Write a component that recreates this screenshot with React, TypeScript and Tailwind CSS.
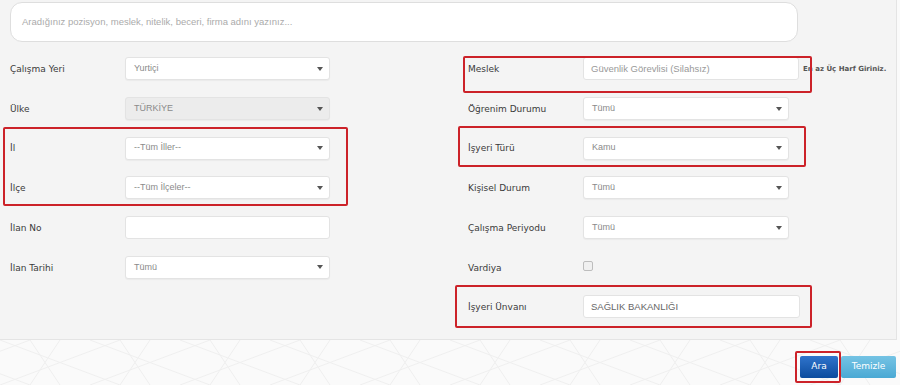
import React from 'react';

type Field =
  | { kind: 'select'; label: string; value: string; width: number; disabled?: boolean }
  | { kind: 'input'; label: string; value: string; width: number; strong?: boolean; hint?: string }
  | { kind: 'check'; label: string };

const leftFields: Field[] = [
  { kind: 'select', label: 'Çalışma Yeri', value: 'Yurtiçi', width: 205 },
  { kind: 'select', label: 'Ülke', value: 'TÜRKİYE', width: 205, disabled: true },
  { kind: 'select', label: 'İl', value: '--Tüm İller--', width: 205 },
  { kind: 'select', label: 'İlçe', value: '--Tüm İlçeler--', width: 205 },
  { kind: 'input', label: 'İlan No', value: '', width: 205 },
  { kind: 'select', label: 'İlan Tarihi', value: 'Tümü', width: 205 },
];

const rightFields: Field[] = [
  { kind: 'input', label: 'Meslek', value: 'Güvenlik Görevlisi (Silahsız)', width: 216, hint: 'En az Üç Harf Giriniz.' },
  { kind: 'select', label: 'Öğrenim Durumu', value: 'Tümü', width: 206 },
  { kind: 'select', label: 'İşyeri Türü', value: 'Kamu', width: 206 },
  { kind: 'select', label: 'Kişisel Durum', value: 'Tümü', width: 206 },
  { kind: 'select', label: 'Çalışma Periyodu', value: 'Tümü', width: 206 },
  { kind: 'check', label: 'Vardiya' },
  { kind: 'input', label: 'İşyeri Ünvanı', value: 'SAĞLIK BAKANLIĞI', width: 217, strong: true },
];

function FieldRow({ field }: { field: Field }) {
  return (
    <div className="flex items-center h-[39.7px]">
      <div className="w-[115px] shrink-0 pt-[2px] text-[9px] text-[#3a3a3a] font-['DejaVu_Sans',sans-serif]">
        {field.label}
      </div>
      {field.kind === 'select' && (
        <div
          style={{ width: field.width }}
          className={`h-[23px] flex items-center justify-between pl-[8px] pr-[6px] rounded-[3px] border border-[#e3e3e3] shadow-[0_1px_1px_rgba(0,0,0,0.04)] ${
            field.disabled ? 'bg-[#ececec]' : 'bg-white'
          }`}
        >
          <span className="text-[9px] text-[#8a8a8a] font-['Liberation_Sans',Arial,sans-serif]">{field.value}</span>
          <span className="w-0 h-0 border-l-[3px] border-r-[3px] border-t-[4px] border-l-transparent border-r-transparent border-t-[#555]" />
        </div>
      )}
      {field.kind === 'input' && (
        <div className="flex items-center">
          <div
            style={{ width: field.width }}
            className="h-[23px] flex items-center pl-[7px] rounded-[3px] border border-[#e3e3e3] bg-white"
          >
            <span
              className={`font-['Liberation_Sans',Arial,sans-serif] ${
                field.strong ? 'text-[9.5px] text-[#666]' : 'text-[9.5px] text-[#999]'
              }`}
            >
              {field.value}
            </span>
          </div>
          {field.hint && (
            <span className="ml-[4px] text-[7px] font-bold text-[#555] font-['DejaVu_Sans',sans-serif] whitespace-nowrap">
              {field.hint}
            </span>
          )}
        </div>
      )}
      {field.kind === 'check' && (
        <div className="w-[10px] h-[10px] mb-[2px] rounded-[2px] border border-[#bdbdbd] bg-[#f0f0f0]" />
      )}
    </div>
  );
}

function Pattern() {
  const lines: string[] = [];
  for (let i = -4; i < 14; i++) {
    const x = i * 90;
    lines.push(`M${x} 0 L${x + 120} 45`);
    lines.push(`M${x + 120} 0 L${x} 45`);
    lines.push(`M${x + 30} 0 L${x + 60} 45`);
    lines.push(`M${x + 60} 0 L${x + 30} 45`);
  }
  return (
    <svg width="900" height="45" className="block">
      <path d={lines.join(' ')} stroke="#efefef" strokeWidth="1" fill="none" />
    </svg>
  );
}

export default function App() {
  return (
    <div className="relative w-[900px] h-[385px] overflow-hidden bg-[#fafafa]">
      <div className="w-[897px] h-[340px] bg-[#f4f4f4] border-r border-b border-[#e4e4e4] pt-[2px]">
        <div className="ml-[10px] w-[788px] h-[40px] rounded-[12px] border border-[#dedede] bg-white flex items-center pl-[11px]">
          <span className="text-[9.5px] text-[#ababab] font-['Liberation_Sans',Arial,sans-serif]">
            Aradığınız pozisyon, meslek, nitelik, beceri, firma adını yazınız...
          </span>
        </div>
        <div className="flex mt-[7px]">
          <div className="ml-[10px] w-[458px] flex flex-col">
            {leftFields.map(f => (
              <FieldRow key={f.label} field={f} />
            ))}
          </div>
          <div className="flex flex-col">
            {rightFields.map(f => (
              <FieldRow key={f.label} field={f} />
            ))}
          </div>
        </div>
      </div>

      <div className="flex">
        <Pattern />
      </div>

      <div className="absolute left-[800px] top-[356px] flex gap-[3px]">
        <button className="w-[38px] h-[22px] rounded-[2px] bg-gradient-to-b from-[#2f74cc] to-[#0b4c9e] text-white text-[9px] font-['DejaVu_Sans',sans-serif]">
          Ara
        </button>
        <button className="w-[55px] h-[22px] rounded-[2px] bg-gradient-to-b from-[#74c3e4] to-[#4aa9d4] text-white text-[9px] font-['DejaVu_Sans',sans-serif]">
          Temizle
        </button>
      </div>

      {/* annotation boxes */}
      <div className="absolute left-[3px] top-[127px] w-[345px] h-[79px] border-[2.5px] border-[#cc2229] rounded-[2px] pointer-events-none" />
      <div className="absolute left-[463px] top-[56px] w-[349px] h-[37px] border-[2.5px] border-[#cc2229] rounded-[2px] pointer-events-none" />
      <div className="absolute left-[458px] top-[126px] w-[348px] h-[41px] border-[2.5px] border-[#cc2229] rounded-[2px] pointer-events-none" />
      <div className="absolute left-[455px] top-[285px] w-[357px] h-[43px] border-[2.5px] border-[#cc2229] rounded-[2px] pointer-events-none" />
      <div className="absolute left-[795px] top-[351px] w-[46px] h-[32px] border-[2.5px] border-[#cc2229] rounded-[2px] pointer-events-none" />
    </div>
  );
}
